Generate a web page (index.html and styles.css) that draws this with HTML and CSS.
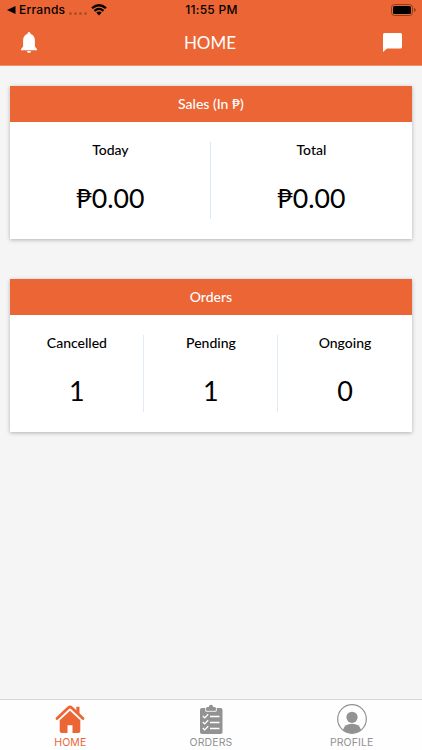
FILE: index.html
```html
<!DOCTYPE html>
<html lang="en">
<head>
<meta charset="utf-8">
<meta name="viewport" content="width=device-width, initial-scale=1">
<title>Home</title>
<link rel="stylesheet" href="styles.css">
</head>
<body>
<div class="app">
  <header class="top">
    <div class="status">
      <div class="status-left">
        <svg class="back" viewBox="0 0 9 8"><path d="M0 4L8.5 0V8Z"/></svg>
        <span class="carrier">Errands</span>
        <span class="signal"><i></i><i></i><i></i><i></i></span>
        <svg class="wifi" viewBox="0 0 16 12"><path d="M1 4.200Q8-1.700 15 4.200M3.500 6.800Q8 2.900 12.500 6.800" fill="none" stroke="#000" stroke-width="2.200"/><path d="M5.300 8.600Q8 6.300 10.700 8.600L8 11.400Z"/></svg>
      </div>
      <time class="clock">11:55 PM</time>
      <div class="status-right"><svg class="battery" viewBox="0 0 25 12"><rect x=".5" y=".5" width="21" height="11" rx="3" fill="none" stroke="#8e3d20"/><rect x="2" y="2" width="18" height="8" rx="1.5"/><path d="M23 4q1.700.5 1.700 2T23 8Z" fill="#8e3d20"/></svg></div>
    </div>
    <div class="nav">
      <svg class="bell" viewBox="0 0 16 21"><path d="M8 0a1.500 1.500 0 0 0-1.500 1.500v.6C3.700 2.800 2.100 5.200 2.100 8.500V14.500L0 17.200V18.300H16V17.200L13.900 14.500V8.500c0-3.300-1.600-5.700-4.400-6.400v-.6A1.500 1.500 0 0 0 8 0ZM6 19h4a2 2 0 0 1-4 0Z"/></svg>
      <h1 class="title">HOME</h1>
      <svg class="chat" viewBox="0 0 19 19"><path d="M1.500 0h16Q19 0 19 1.500V14Q19 15.500 17.500 15.500H4L0 19V1.500Q0 0 1.500 0Z"/></svg>
    </div>
  </header>
  <main class="content">
    <section class="card">
      <h2 class="card-title">Sales (In ₱)</h2>
      <div class="stats sales">
        <div class="stat"><span class="label">Today</span><span class="value">₱0.00</span></div>
        <div class="stat"><span class="label">Total</span><span class="value">₱0.00</span></div>
      </div>
    </section>
    <section class="card">
      <h2 class="card-title">Orders</h2>
      <div class="stats orders">
        <div class="stat"><span class="label">Cancelled</span><span class="value">1</span></div>
        <div class="stat"><span class="label">Pending</span><span class="value">1</span></div>
        <div class="stat"><span class="label">Ongoing</span><span class="value">0</span></div>
      </div>
    </section>
  </main>
  <nav class="tabs">
    <a class="tab active">
      <svg viewBox="0 0 30 30"><path d="M2 14.500L13.300 3.700Q15 2.200 16.700 3.700L28 14.500" fill="none" stroke="currentColor" stroke-width="2.800" stroke-linecap="round"/><path d="M21.300 2.800h3.200v7l-3.200-3.200ZM4.700 16.200L15 6.700l10.300 9.500V27Q25.300 29 23.300 29H17.500V21.300H12.500V29H6.700Q4.700 29 4.700 27Z"/></svg>
      <span>HOME</span>
    </a>
    <a class="tab">
      <svg viewBox="0 0 30 30"><path d="M6 4H24.500Q26.500 4 26.500 6V28Q26.500 30 24.500 30H6Q4 30 4 28V6Q4 4 6 4Z"/><path d="M9.800 3.500V7.200H20.200V3.500" fill="none" stroke="#fff"/><path d="M11.500 3h1.300Q13 .8 15 .8T17.200 3h1.300Q19.700 3 19.700 4V6.500H10.300V4Q10.300 3 11.500 3Z"/><path d="M6.800 12l1.900 1.900 3.500-3.600M6.800 18l1.900 1.900 3.500-3.600M6.800 24l1.900 1.900 3.500-3.600M14 12.500h9.500M14 18.500h9.500M14 24.500h9.500" fill="none" stroke="#fff" stroke-width="1.300"/></svg>
      <span>ORDERS</span>
    </a>
    <a class="tab">
      <svg viewBox="0 0 30 30"><circle cx="15" cy="15" r="14.300" fill="none" stroke="currentColor" stroke-width="1.200"/><circle cx="15" cy="13.300" r="5.600"/><path d="M6 26Q7.500 19.800 15 19.800T24 26Q20 29.300 15 29.300T6 26Z"/></svg>
      <span>PROFILE</span>
    </a>
  </nav>
</div>
</body>
</html>
```
FILE: styles.css
```css
* { box-sizing: border-box; }
body { margin: 0; background: #f5f5f5; font-family: Lato, "Noto Sans", sans-serif; color: #000; }
svg { display: block; fill: currentColor; }
.app { height: 750px; display: flex; flex-direction: column; }
.top { height: 66px; background: #ec6535; border-bottom: 1px solid #ef8f6d; }
.status { height: 20px; display: grid; grid-template-columns: 1fr auto 1fr; align-items: center; padding: 0 6px 0 7px; font: 500 12px/20px Inter, sans-serif; }
.status-left { display: flex; align-items: center; }
.back { width: 9px; height: 8px; }
.carrier { margin-left: 3px; letter-spacing: .25px; }
.signal { display: flex; gap: 2px; margin: 7px 0 0 4px; }
.signal i { width: 3px; height: 3px; border-radius: 50%; background: #b34d29; }
.wifi { width: 16px; height: 12px; margin-left: 4px; }
.clock { letter-spacing: .3px; }
.status-right { display: flex; justify-content: flex-end; }
.battery { width: 25px; height: 12px; }
.nav { height: 45px; display: flex; align-items: center; justify-content: space-between; padding: 0 20px 0 21px; color: #fff; }
.bell { width: 16px; height: 21px; }
.title { margin: 1px 0 0; font-size: 17px; line-height: 24px; font-weight: 400; }
.chat { width: 19px; height: 19px; }
.content { flex: 1; padding: 20px 10.500px 20px 10.400px; display: flex; flex-direction: column; gap: 40.400px; }
.card { height: 152.800px; background: #fff; box-shadow: 0 1px 4px rgba(0, 0, 0, .28); }
.card-title { margin: 0; height: 35.500px; background: #ec6535; color: #fff; font-size: 14px; line-height: 36px; font-weight: 500; text-align: center; }
.stats { display: flex; padding-top: 20px; }
.stat { flex: 1; height: 77px; display: flex; flex-direction: column; align-items: center; }
.sales .stat:first-child { flex: 0 0 201px; border-right: 1px solid #d3eafa; }
.orders .stat:not(:last-child) { border-right: 1px solid #e0ebf5; }
.label { font-size: 14px; line-height: 17px; font-weight: 500; margin-top: -1px; }
.value { margin-top: 23px; font-size: 27px; line-height: 34px; }
.sales .value { font-size: 26.700px; }
.tabs { height: 51px; display: flex; background: #fefefe; border-top: 1px solid #d5d5d5; }
.tab { flex: 1; display: flex; flex-direction: column; align-items: center; padding-top: 4px; color: #929292; font: 400 10.500px/14px Inter, sans-serif; letter-spacing: .1px; }
.tab svg { width: 30px; height: 30px; }
.tab span { margin-top: 2px; }
.active { color: #ec6535; }
```
